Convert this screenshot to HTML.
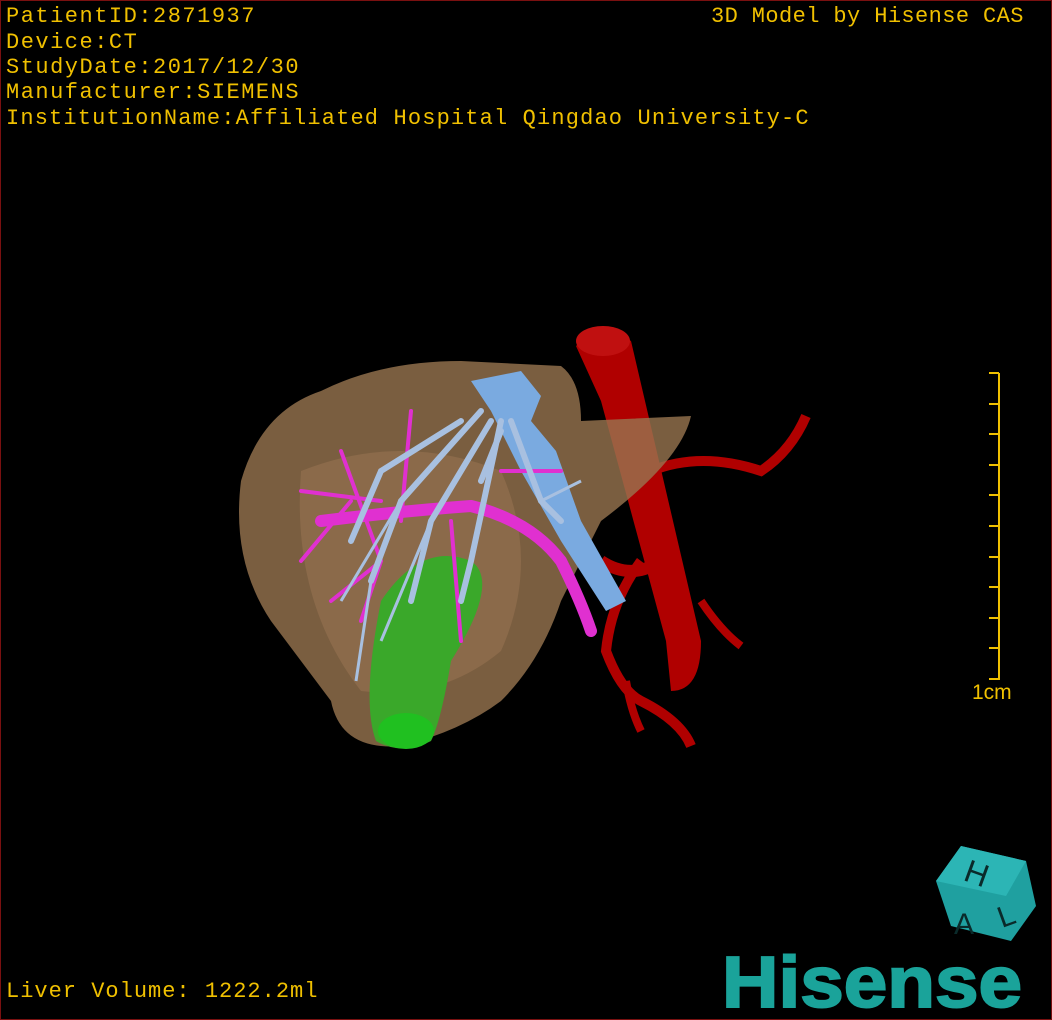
<!DOCTYPE html>
<html><head><meta charset="utf-8"><style>
html,body{margin:0;padding:0;background:#000;}
#v{position:relative;width:1050px;height:1018px;border:1px solid #7a1010;background:#000;overflow:hidden;font-family:"Liberation Mono",monospace;color:#f0c000;}
.t{position:absolute;left:5px;font-size:22px;letter-spacing:1.5px;white-space:pre;line-height:25px;}
</style></head><body><div id="v">
<div class="t" style="top:3px">PatientID:2871937</div>
<div class="t" style="top:29px">Device:CT</div>
<div class="t" style="top:54px">StudyDate:2017/12/30</div>
<div class="t" style="top:79px">Manufacturer:SIEMENS</div>
<div class="t" style="top:105px;letter-spacing:1.15px">InstitutionName:Affiliated Hospital Qingdao University-C</div>
<div class="t" style="top:3px;left:710px;letter-spacing:0.4px">3D Model by Hisense CAS</div>
<div class="t" style="top:978px;letter-spacing:1px">Liver Volume: 1222.2ml</div>
<svg width="1050" height="1018" style="position:absolute;left:0;top:0">
<g stroke="#f0c000" stroke-width="2">
<line x1="998" y1="372" x2="998" y2="679"/>
<line x1="988" y1="372" x2="998" y2="372"/><line x1="988" y1="403" x2="998" y2="403"/><line x1="988" y1="433" x2="998" y2="433"/><line x1="988" y1="464" x2="998" y2="464"/><line x1="988" y1="494" x2="998" y2="494"/><line x1="988" y1="525" x2="998" y2="525"/><line x1="988" y1="556" x2="998" y2="556"/><line x1="988" y1="586" x2="998" y2="586"/><line x1="988" y1="617" x2="998" y2="617"/><line x1="988" y1="647" x2="998" y2="647"/><line x1="988" y1="678" x2="998" y2="678"/>
</g>
<text x="971" y="698" fill="#f0c000" font-family="Liberation Sans" font-size="21">1cm</text>
<path d="M575 345 Q600 320 630 340 L700 640 Q700 690 670 690 L665 640 L600 400 Z" fill="#b00000"/>
<ellipse cx="602" cy="340" rx="27" ry="15" fill="#c01010"/>
<path d="M650 470 Q700 450 760 470 Q790 450 805 415" stroke="#b00000" stroke-width="10" fill="none"/>
<path d="M640 560 Q610 600 605 650 Q620 690 640 700 Q680 720 690 745" stroke="#b00000" stroke-width="10" fill="none"/>
<path d="M625 680 Q630 710 640 730" stroke="#b00000" stroke-width="8" fill="none"/>
<path d="M600 560 Q630 580 660 560" stroke="#b00000" stroke-width="12" fill="none"/>
<path d="M700 600 Q720 630 740 645" stroke="#b00000" stroke-width="8" fill="none"/>
<path d="M240 480 Q260 410 320 390 Q380 360 460 360 L560 365 Q580 380 580 420 L690 415 Q680 460 600 520 L560 600 Q540 660 500 700 Q460 730 400 745 Q340 750 330 700 Q300 660 270 620 Q230 560 240 480 Z" fill="#987550" opacity="0.8"/>
<path d="M300 470 Q400 430 500 470 Q540 560 500 650 Q440 700 360 690 Q290 600 300 470Z" fill="#c09066" opacity="0.25"/>
<path d="M380 600 Q420 540 470 560 Q500 580 450 660 Q440 720 430 740 Q400 755 375 740 Q360 700 380 600 Z" fill="#3aa82a"/>
<ellipse cx="405" cy="730" rx="28" ry="18" fill="#20c020"/>
<path d="M470 380 L520 370 L540 395 L530 420 L555 450 L580 520 L625 600 L605 610 L560 540 L520 470 L490 410 Z" fill="#7aaae0"/>
<g stroke="#e030d0" fill="none" stroke-linecap="round">
<path d="M320 520 Q400 510 470 505 Q530 520 560 560 Q580 600 590 630" stroke-width="12"/>
<path d="M340 450 L380 560 L360 620 M410 410 L400 520 M300 560 L350 500 M450 520 L460 640 M330 600 L380 560 M500 470 L560 470 M300 490 L380 500" stroke-width="4"/>
</g>
<g stroke="#a8c0e0" fill="none" stroke-width="6" stroke-linecap="round">
<path d="M480 410 L400 500 L370 580 M490 420 L430 520 L410 600 M500 420 L470 560 L460 600 M510 420 L540 500 L560 520 M460 420 L380 470 L350 540 M500 430 L480 480"/>
</g>
<g stroke="#a8c0e0" fill="none" stroke-width="3">
<path d="M370 580 L355 680 M400 500 L340 600 M430 520 L380 640 M540 500 L580 480"/>
</g>
<g transform="translate(935,845)">
<polygon points="25,0 90,15 100,60 75,95 15,80 0,35" fill="#1fa0a0"/>
<polygon points="25,0 90,15 70,50 0,35" fill="#2cb5b5"/>
<text x="30" y="38" font-family="Liberation Sans" font-size="32" fill="#0a2a2a" transform="rotate(20 40 25)">H</text>
<text x="18" y="88" font-family="Liberation Sans" font-size="30" fill="#0a2a2a">A</text>
<text x="62" y="80" font-family="Liberation Sans" font-size="30" fill="#0a2a2a" transform="rotate(-20 70 70)">L</text>
</g>
<text x="721" y="1006" font-family="Liberation Sans" font-weight="bold" font-size="72" fill="#1aa39a" stroke="#1aa39a" stroke-width="2" textLength="300" lengthAdjust="spacingAndGlyphs">Hisense</text>
</svg>
</div></body></html>
